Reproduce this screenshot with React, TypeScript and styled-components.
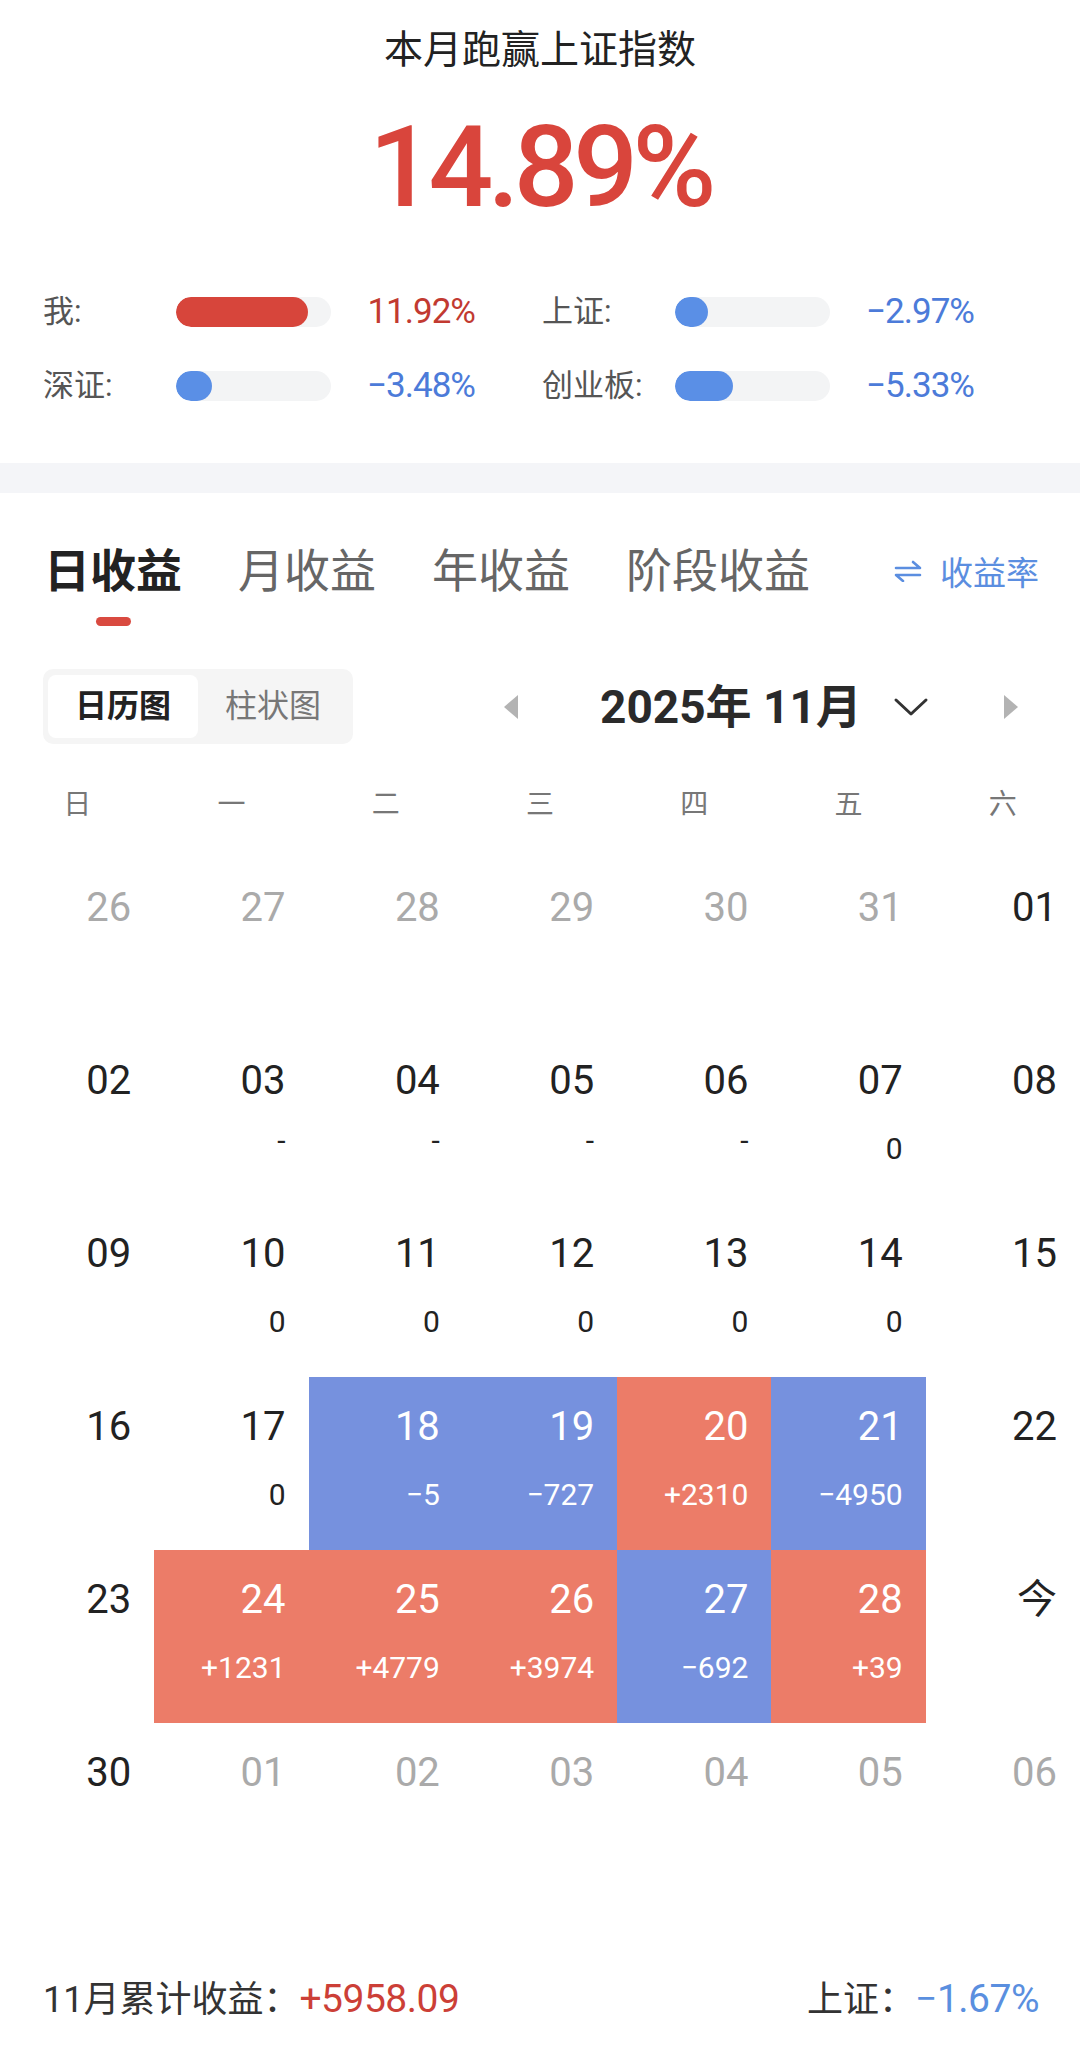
import React from 'react';
import styled, { createGlobalStyle } from 'styled-components';

const GlobalStyle = createGlobalStyle`
  body {
    margin: 0;
    background: #ffffff;
    font-family: Roboto, "Noto Sans CJK SC", sans-serif;
    color: #222222;
  }
`;

const Page = styled.div`
  width: 1080px;
  background: #ffffff;
  padding-bottom: 38px;
`;

const Summary = styled.section`
  padding: 25px 0 57px;
`;

const Title = styled.h1`
  margin: 0;
  font-size: 39px;
  line-height: 50px;
  font-weight: 400;
  text-align: center;
  color: #222222;
`;

const Headline = styled.div`
  margin-top: 35px;
  font-size: 114px;
  line-height: 115px;
  font-weight: 500;
  letter-spacing: -5.5px;
  text-align: center;
  color: #d9453c;
`;

const StatsGrid = styled.div`
  margin-top: 67px;
  padding: 0 105px 0 43px;
  display: grid;
  grid-template-columns: 432px 432px;
  column-gap: 67px;
  row-gap: 34px;
`;

const StatRow = styled.div`
  display: grid;
  grid-template-columns: 133px 155px 1fr;
  align-items: center;
  height: 40px;
`;

const StatLabel = styled.span`
  font-size: 31px;
  line-height: 40px;
  color: #555555;
`;

const Track = styled.div`
  height: 30px;
  border-radius: 15px;
  background: #f3f4f5;
  overflow: hidden;
`;

const Fill = styled.div<{ $tone: 'up' | 'down' }>`
  height: 100%;
  border-radius: 15px;
  background: ${(p) => (p.$tone === 'up' ? '#d7453b' : '#5a8fe6')};
`;

const StatValue = styled.span<{ $tone: 'up' | 'down' }>`
  text-align: right;
  font-size: 35px;
  line-height: 40px;
  letter-spacing: -1px;
  color: ${(p) => (p.$tone === 'up' ? '#c23a31' : '#4c7bd9')};
`;

const Band = styled.div`
  height: 30px;
  background: #f4f5f8;
`;

const TabRow = styled.nav`
  display: flex;
  align-items: flex-start;
  gap: 56px;
  padding: 48px 41px 0 44px;
`;

const Tab = styled.div`
  display: flex;
  flex-direction: column;
  align-items: center;
`;

const TabLabel = styled.span<{ $active?: boolean }>`
  font-size: 46px;
  line-height: 60px;
  font-weight: ${(p) => (p.$active ? 700 : 400)};
  color: ${(p) => (p.$active ? '#222222' : '#666666')};
`;

const TabMark = styled.span<{ $active?: boolean }>`
  margin-top: 16px;
  width: 35px;
  height: 9px;
  border-radius: 5px;
  background: ${(p) => (p.$active ? '#d94a40' : 'transparent')};
`;

const RateSwitch = styled.div`
  margin-left: auto;
  display: flex;
  align-items: center;
  gap: 18px;
  height: 60px;
  font-size: 33px;
  color: #5b8ee0;
`;

const Toolbar = styled.div`
  display: flex;
  align-items: center;
  margin-top: 43px;
  padding-left: 43px;
`;

const ViewToggle = styled.div`
  display: flex;
  padding: 6px 5px;
  border-radius: 10px;
  background: #f5f5f5;
`;

const ToggleOption = styled.span<{ $active?: boolean }>`
  width: 150px;
  height: 63px;
  line-height: 63px;
  text-align: center;
  border-radius: 8px;
  font-size: 32px;
  font-weight: ${(p) => (p.$active ? 700 : 400)};
  color: ${(p) => (p.$active ? '#222222' : '#777777')};
  background: ${(p) => (p.$active ? '#ffffff' : 'transparent')};
`;

const MonthNav = styled.div`
  display: flex;
  align-items: center;
  margin-left: 149px;
`;

const MonthLabel = styled.span`
  margin-left: 80px;
  font-size: 46px;
  line-height: 60px;
  font-weight: 700;
  color: #2a2a2a;
`;

const Chevron = styled.svg`
  margin-left: 31px;
`;

const NextArrow = styled.svg`
  margin-left: 73px;
`;

const WeekHeader = styled.div`
  display: grid;
  grid-template-columns: repeat(7, 1fr);
  margin-top: 41px;
`;

const WeekDay = styled.span`
  text-align: center;
  font-size: 28px;
  line-height: 40px;
  color: #777777;
`;

const CalendarGrid = styled.div`
  display: grid;
  grid-template-columns: repeat(7, 1fr);
  grid-auto-rows: 173px;
  margin-top: 33px;
`;

type Tone = 'up' | 'down';

const DayCell = styled.div<{ $tone?: Tone }>`
  display: flex;
  flex-direction: column;
  align-items: flex-end;
  padding: 26px 23px 0 0;
  background: ${(p) => (p.$tone === 'up' ? '#ec7c68' : p.$tone === 'down' ? '#7691de' : 'transparent')};
  color: ${(p) => (p.$tone ? '#ffffff' : '#222222')};
`;

const DayNum = styled.span<{ $muted?: boolean }>`
  font-size: 40px;
  line-height: 48px;
  color: ${(p) => (p.$muted ? '#aaaaaa' : 'inherit')};
`;

const DayAmount = styled.span<{ $empty?: boolean }>`
  margin-top: ${(p) => (p.$empty ? '18px' : '26px')};
  font-size: 30px;
  line-height: 36px;
`;

const Footer = styled.footer`
  display: flex;
  justify-content: space-between;
  align-items: baseline;
  margin-top: 83px;
  padding: 0 41px 0 43px;
  font-size: 36px;
  line-height: 40px;
  color: #333333;
`;

const FooterValue = styled.span<{ $tone: Tone }>`
  font-size: 39px;
  letter-spacing: -0.5px;
  color: ${(p) => (p.$tone === 'up' ? '#cc3f37' : '#5a8fdf')};
`;

const stats: { label: string; value: string; tone: Tone; fill: number }[] = [
  { label: '我:', value: '11.92%', tone: 'up', fill: 132 },
  { label: '上证:', value: '−2.97%', tone: 'down', fill: 33 },
  { label: '深证:', value: '−3.48%', tone: 'down', fill: 36 },
  { label: '创业板:', value: '−5.33%', tone: 'down', fill: 58 },
];

const tabs = ['日收益', '月收益', '年收益', '阶段收益'];
const weekdays = ['日', '一', '二', '三', '四', '五', '六'];

type Day = { day: string; amount?: string; tone?: Tone; muted?: boolean };

const m = (day: string): Day => ({ day, muted: true });
const d = (day: string, amount?: string, tone?: Tone): Day => ({ day, amount, tone });

const days: Day[] = [
  m('26'), m('27'), m('28'), m('29'), m('30'), m('31'), d('01'),
  d('02'), d('03', '-'), d('04', '-'), d('05', '-'), d('06', '-'), d('07', '0'), d('08'),
  d('09'), d('10', '0'), d('11', '0'), d('12', '0'), d('13', '0'), d('14', '0'), d('15'),
  d('16'), d('17', '0'), d('18', '−5', 'down'), d('19', '−727', 'down'), d('20', '+2310', 'up'), d('21', '−4950', 'down'), d('22'),
  d('23'), d('24', '+1231', 'up'), d('25', '+4779', 'up'), d('26', '+3974', 'up'), d('27', '−692', 'down'), d('28', '+39', 'up'), d('今'),
  d('30'), m('01'), m('02'), m('03'), m('04'), m('05'), m('06'),
];

function SwapIcon() {
  return (
    <svg width="28" height="22" viewBox="0 0 28 22" fill="none" stroke="currentColor" strokeWidth="2.6" strokeLinecap="round" strokeLinejoin="round">
      <path d="M2 8 H26 L19 2" />
      <path d="M26 15 H2 L9 21" />
    </svg>
  );
}

export default function App() {
  return (
    <Page>
      <GlobalStyle />
      <Summary>
        <Title>本月跑赢上证指数</Title>
        <Headline>14.89%</Headline>
        <StatsGrid>
          {stats.map((s) => (
            <StatRow key={s.label}>
              <StatLabel>{s.label}</StatLabel>
              <Track>
                <Fill $tone={s.tone} style={{ width: s.fill }} />
              </Track>
              <StatValue $tone={s.tone}>{s.value}</StatValue>
            </StatRow>
          ))}
        </StatsGrid>
      </Summary>
      <Band />

      <TabRow>
        {tabs.map((t, i) => (
          <Tab key={t}>
            <TabLabel $active={i === 0}>{t}</TabLabel>
            <TabMark $active={i === 0} />
          </Tab>
        ))}
        <RateSwitch>
          <SwapIcon />
          <span>收益率</span>
        </RateSwitch>
      </TabRow>

      <Toolbar>
        <ViewToggle>
          <ToggleOption $active>日历图</ToggleOption>
          <ToggleOption>柱状图</ToggleOption>
        </ViewToggle>
        <MonthNav>
          <svg width="18" height="26" viewBox="0 0 18 26">
            <path d="M16 1 L2 13 L16 25 Z" fill="#b3b3b3" />
          </svg>
          <MonthLabel>2025年 11月</MonthLabel>
          <Chevron width="36" height="20" viewBox="0 0 36 20" fill="none" stroke="#333" strokeWidth="3" strokeLinecap="round" strokeLinejoin="round">
            <path d="M3 3 L18 17 L33 3" />
          </Chevron>
          <NextArrow width="18" height="26" viewBox="0 0 18 26">
            <path d="M2 1 L16 13 L2 25 Z" fill="#b3b3b3" />
          </NextArrow>
        </MonthNav>
      </Toolbar>

      <WeekHeader>
        {weekdays.map((w) => (
          <WeekDay key={w}>{w}</WeekDay>
        ))}
      </WeekHeader>

      <CalendarGrid>
        {days.map((c, i) => (
          <DayCell key={i} $tone={c.tone}>
            <DayNum $muted={c.muted}>{c.day}</DayNum>
            {c.amount && <DayAmount $empty={c.amount === '-'}>{c.amount}</DayAmount>}
          </DayCell>
        ))}
      </CalendarGrid>

      <Footer>
        <span>
          11月累计收益：<FooterValue $tone="up">+5958.09</FooterValue>
        </span>
        <span>
          上证：<FooterValue $tone="down">−1.67%</FooterValue>
        </span>
      </Footer>
    </Page>
  );
}
